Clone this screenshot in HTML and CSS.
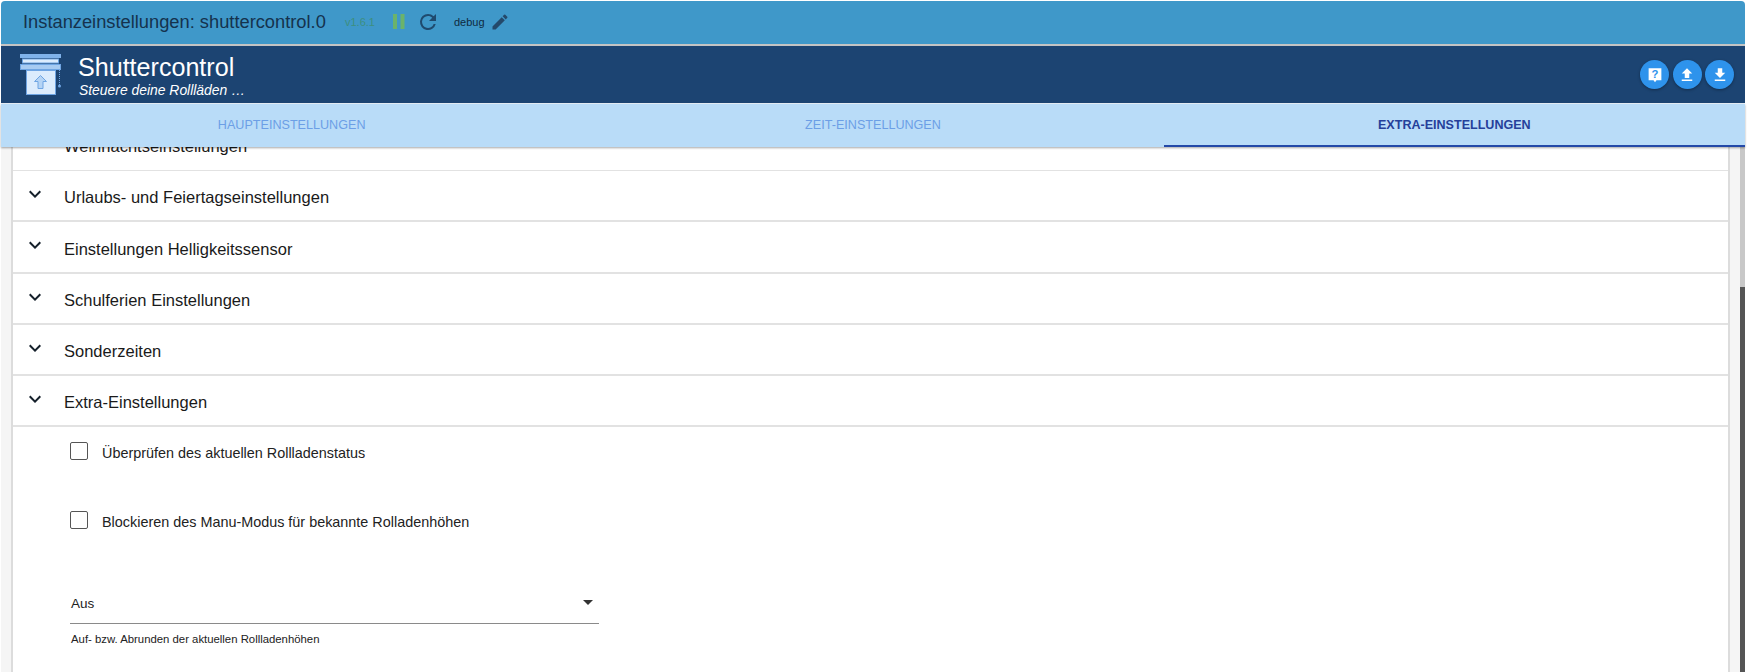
FILE: index.html
```html
<!DOCTYPE html>
<html lang="de">
<head>
<meta charset="utf-8">
<title>Instanzeinstellungen</title>
<link rel="stylesheet" href="styles.css">
</head>
<body>
<div class="app">
  <header class="topbar">
    <span class="inst-title">Instanzeinstellungen: shuttercontrol.0</span>
    <span class="version">v1.6.1</span>
    <svg class="ic-pause" viewBox="0 0 12 15"><path d="M0 0h4v15H0zM7.500 0h4v15h-4z"/></svg>
    <svg class="ic-refresh" viewBox="0 0 24 24"><path d="M17.650 6.350A7.960 7.960 0 0 0 12 4a8 8 0 1 0 7.730 10h-2.080A6 6 0 1 1 12 6c1.660 0 3.140.69 4.220 1.780L13 11h7V4l-2.350 2.350z"/></svg>
    <span class="debug">debug</span>
    <svg class="ic-edit" viewBox="0 0 24 24"><path d="M3 17.250V21h3.750L17.810 9.940l-3.750-3.750L3 17.250zM20.710 7.040a1 1 0 0 0 0-1.410l-2.340-2.340a1 1 0 0 0-1.410 0l-1.830 1.830 3.750 3.750 1.830-1.830z"/></svg>
  </header>
  <div class="brand">
    <svg class="logo" viewBox="0 0 41 41">
      <rect x="6.500" y="16.500" width="29" height="24" fill="#dcecfd" stroke="#6fa5e3"/>
      <rect x="0" y="0" width="41" height="4" fill="#7fb2ea"/>
      <rect x="2.500" y="5" width="36" height="4" fill="#dcecfd" stroke="#6fa5e3"/>
      <rect x="0.500" y="10.500" width="40" height="5" fill="#a7cbf2" stroke="#6fa5e3"/>
      <path d="M20.500 21.500l-6 6h3.500v7h5v-7h3.500z" fill="#b5d4f5" stroke="#6fa5e3"/>
      <path d="M39.500 16v15" stroke="#6fa5e3" stroke-dasharray="1 1"/>
      <circle cx="39.500" cy="32" r="1.500" fill="#6fa5e3"/>
    </svg>
    <div class="brand-text">
      <div class="brand-name">Shuttercontrol</div>
      <div class="brand-sub">Steuere deine Rollläden …</div>
    </div>
    <div class="fabs">
      <button class="fab" aria-label="Hilfe"><svg viewBox="0 0 24 24"><path class="fab-w" d="M3.500 3h17v16h-6.500l-2 2.500-2-2.500H3.500z"/><text x="12" y="16" class="fab-q">?</text></svg></button>
      <button class="fab" aria-label="Hochladen"><svg viewBox="0 0 24 24"><path class="fab-w" d="M9 16v-6H5l7-7 7 7h-4v6zM5 18h14v2H5z"/></svg></button>
      <button class="fab" aria-label="Herunterladen"><svg viewBox="0 0 24 24"><path class="fab-w" d="M19 9h-4V3H9v6H5l7 7zM5 18h14v2H5z"/></svg></button>
    </div>
  </div>
  <nav class="tabs">
    <div class="tab">HAUPTEINSTELLUNGEN</div>
    <div class="tab">ZEIT-EINSTELLUNGEN</div>
    <div class="tab active">EXTRA-EINSTELLUNGEN</div>
  </nav>
  <div class="body">
    <main class="panel">
      <div class="row row-clipped"><span class="row-label">Weihnachtseinstellungen</span></div>
      <div class="row h51"><svg class="chev" viewBox="0 0 12 8"><path d="M1.400 .6L6 5.200 10.600 .6 12 2 6 8 0 2z"/></svg><span class="row-label">Urlaubs- und Feiertagseinstellungen</span></div>
      <div class="row h52"><svg class="chev" viewBox="0 0 12 8"><path d="M1.400 .6L6 5.200 10.600 .6 12 2 6 8 0 2z"/></svg><span class="row-label">Einstellungen Helligkeitssensor</span></div>
      <div class="row h51"><svg class="chev" viewBox="0 0 12 8"><path d="M1.400 .6L6 5.200 10.600 .6 12 2 6 8 0 2z"/></svg><span class="row-label">Schulferien Einstellungen</span></div>
      <div class="row h51"><svg class="chev" viewBox="0 0 12 8"><path d="M1.400 .6L6 5.200 10.600 .6 12 2 6 8 0 2z"/></svg><span class="row-label">Sonderzeiten</span></div>
      <div class="row h51"><svg class="chev" viewBox="0 0 12 8"><path d="M1.400 .6L6 5.200 10.600 .6 12 2 6 8 0 2z"/></svg><span class="row-label">Extra-Einstellungen</span></div>
      <section class="details">
        <label class="check"><span class="box"></span><span class="check-label">Überprüfen des aktuellen Rollladenstatus</span></label>
        <label class="check"><span class="box"></span><span class="check-label">Blockieren des Manu-Modus für bekannte Rolladenhöhen</span></label>
        <div class="select"><span>Aus</span><span class="caret"></span></div>
        <div class="helper">Auf- bzw. Abrunden der aktuellen Rollladenhöhen</div>
      </section>
    </main>
    <div class="scrollbar"><div class="thumb"></div></div>
  </div>
</div>
</body>
</html>
```
FILE: styles.css
```css
* { box-sizing: border-box; }
html, body { height: 100%; }
body {
  margin: 0;
  background: #fff;
  overflow: hidden;
  font-family: "Liberation Sans", Arial, sans-serif;
  color: #111;
}
.app {
  width: 1744px;
  height: 671px;
  margin: 1px 0 0 1px;
  display: flex;
  flex-direction: column;
}
.topbar {
  height: 43px;
  flex: none;
  background: #3f98c9;
  border-radius: 4px 4px 0 0;
  display: flex;
  align-items: center;
  padding: 0 0 2px 22px;
  color: #17344f;
}
.inst-title { font-size: 18.300px; width: 302px; white-space: nowrap; color: #15324d; }
.version { font-size: 11px; margin-left: 20px; width: 29px; color: #3d8f80; white-space: nowrap; }
.ic-pause { width: 12px; height: 15px; margin-left: 19px; fill: #6bb36b; }
.ic-refresh { width: 24px; height: 24px; margin-left: 11px; fill: #1f4a6e; }
.debug { font-size: 11px; margin-left: 14px; width: 32px; color: #0f2a40; }
.ic-edit { width: 20px; height: 20px; margin-left: 4px; fill: #24496a; }

.brand {
  flex: none;
  height: 58px;
  margin-top: 2px;
  background: #1c4472;
  border-bottom: 1px solid #e8f0f8;
  display: flex;
  align-items: flex-start;
  padding: 8px 11px 0 19px;
  color: #fff;
  box-shadow: 0 -2px 0 #c4c4c4;
}
.logo { width: 41px; height: 41px; flex: none; }
.brand-text { margin-left: 18px; }
.brand-name { font-size: 25.100px; line-height: 26px; margin-left: -1px; }
.brand-sub { font-size: 13.900px; font-style: italic; line-height: 15px; margin-top: 3px; }
.fabs { margin-left: auto; display: flex; gap: 3.500px; margin-top: 6px; }
.fab {
  width: 29px; height: 29px;
  border: 0; padding: 0;
  border-radius: 50%;
  background: #2e93ec;
  box-shadow: 0 1px 3px rgba(0,0,0,.35);
  display: flex; align-items: center; justify-content: center;
}
.fab svg { width: 18px; height: 18px; }
.fab-w { fill: #fff; }
.fab-q { font: bold 15px "Liberation Sans", sans-serif; fill: #2e93ec; text-anchor: middle; }

.tabs {
  flex: none;
  height: 43px;
  display: grid;
  grid-template-columns: repeat(3, 1fr);
  background: #b9dcf8;
  box-shadow: 0 1px 2px rgba(0,0,0,.35);
  position: relative;
  z-index: 2;
}
.tab {
  display: flex; align-items: center; justify-content: center;
  font-size: 12.600px;
  color: #6c9fe6;
  border-bottom: 2px solid transparent;
}
.tab.active { color: #25409a; font-weight: 700; border-bottom-color: #2349a8; font-size: 12.550px; }

.body { flex: 1; display: flex; min-height: 0; background: #f5f5f5; }
.panel {
  flex: 1;
  margin: 0 12px;
  background: #fff;
  box-shadow: 2px 0 0 #dcdcdc, -2px 0 0 #dcdcdc;
  overflow: hidden;
}
.row {
  display: flex;
  align-items: center;
  padding-left: 16px;
  border-bottom: 2px solid #e2e2e2;
}
.h51 { height: 51px; }
.h52 { height: 52px; }
.row-clipped { height: 24px; overflow: hidden; padding-left: 51px; align-items: flex-start; border-bottom-width: 1px; }
.row-clipped .row-label { margin-top: -10px; margin-left: 0; padding-top: 0; }
.chev { width: 12px; height: 8px; flex: none; margin-bottom: 4px; fill: #15202b; }
.row-label { font-size: 16.500px; margin-left: 23px; padding-top: 4px; white-space: nowrap; color: #1a1a1a; }

.details { padding: 15px 0 0 57px; }
.check { display: flex; align-items: center; height: 18px; margin-bottom: 51px; }
.box { width: 18px; height: 18px; border: 1.500px solid #555; border-radius: 2px; flex: none; background: #fff; }
.check-label { margin-left: 14px; font-size: 14.400px; color: #222; white-space: nowrap; padding-top: 3px; }
.select {
  width: 529px;
  height: 44px;
  border-bottom: 1px solid #8a8a8a;
  display: flex;
  align-items: center;
  justify-content: space-between;
  font-size: 13.500px;
  padding: 3px 6px 0 1px;
  color: #222;
}
.caret { width: 0; height: 0; border: 5px solid transparent; border-top-color: #333; border-bottom: 0; margin-bottom: 2px; }
.helper { font-size: 11.350px; margin: 9px 0 0 1px; color: #222; }

.scrollbar { width: 5px; flex: none; background: #c8c8c8; display: flex; flex-direction: column; }
.thumb { flex: 1; margin-top: 140px; background: #555; }
```
